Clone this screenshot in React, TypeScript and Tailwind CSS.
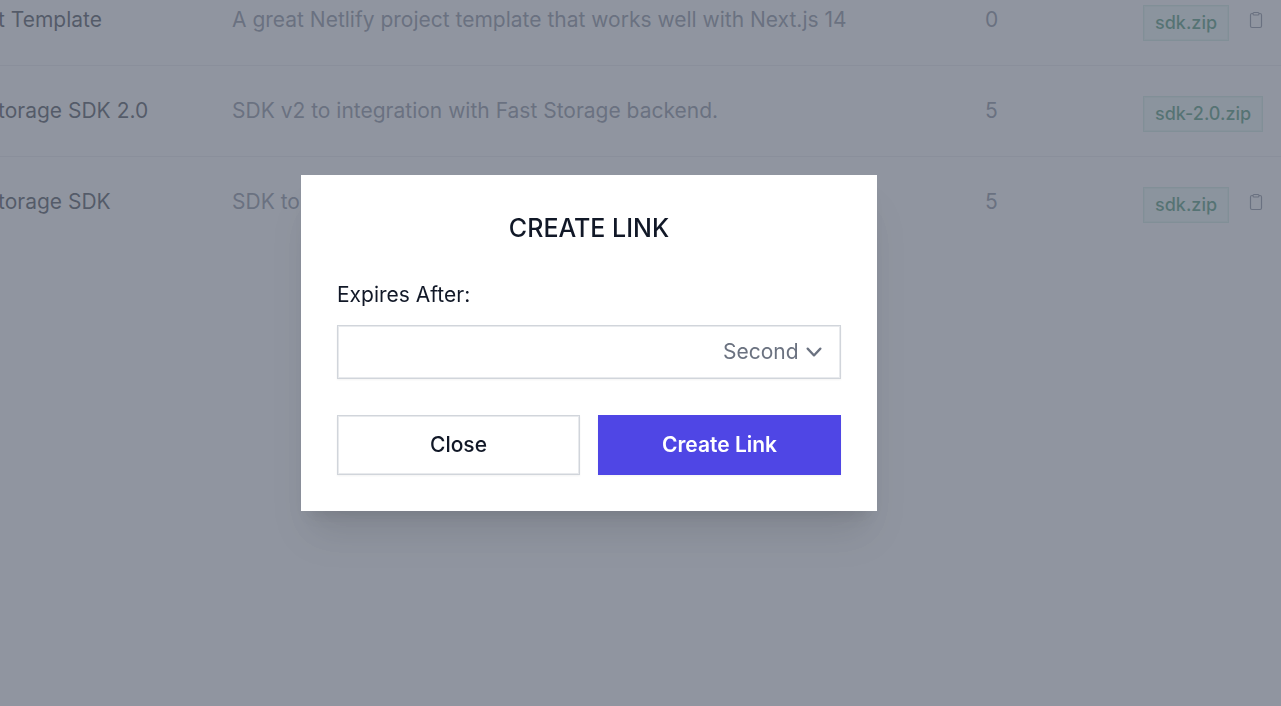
const rows = [
  { name: "t Template", description: "A great Netlify project template that works well with Next.js 14", count: 0, file: "sdk.zip", copy: true },
  { name: "torage SDK 2.0", description: "SDK v2 to integration with Fast Storage backend.", count: 5, file: "sdk-2.0.zip", copy: false },
  { name: "torage SDK", description: "SDK to", count: 5, file: "sdk.zip", copy: true },
];

function ClipboardIcon() {
  return (
    <svg viewBox="0 0 16 18" fill="none" stroke="currentColor" aria-hidden="true" className="h-[18px] w-4">
      <path d="M5 2.5H4A1.5 1.5 0 0 0 2.5 4v11A1.5 1.5 0 0 0 4 16.500h8a1.500 1.500 0 0 0 1.500-1.500V4A1.500 1.500 0 0 0 12 2.500h-1" strokeWidth="1.200" />
      <rect x="5" y="1.500" width="6" height="2.500" rx="1" strokeWidth="1.100" />
    </svg>
  );
}

function FilesTable() {
  return (
    <table className="-mt-[25px] w-full table-fixed border-separate border-spacing-0 text-left text-[21px] leading-[30px] text-gray-500">
      <colgroup>
        <col className="w-[232px]" />
        <col />
        <col className="w-[158px]" />
        <col className="w-[138px]" />
      </colgroup>
      <tbody className="[&>tr:not(:last-child)>td]:border-b [&>tr>td]:border-[#e5e7eb]">
        {rows.map((row) => (
          <tr key={row.name} className="h-[91px] align-top">
            <td className="-indent-0.5 whitespace-nowrap pt-[30px] text-[#111827]">{row.name}</td>
            <td className="whitespace-nowrap pt-[30px]">{row.description}</td>
            <td className="pt-[30px]">{row.count}</td>
            <td className="pt-[30px]">
              <div className="flex items-start gap-[19px]">
                <span className="flex h-9 items-center whitespace-nowrap border border-[#c3e6dc] bg-[#ecfaf6] px-[11px] text-lg font-medium text-[#167a50] ring-1 ring-inset ring-[#daf1ea]">
                  {row.file}
                </span>
                {row.copy && (
                  <button type="button" aria-label="Copy link" className="mt-1.5 shrink-0">
                    <ClipboardIcon />
                  </button>
                )}
              </div>
            </td>
          </tr>
        ))}
      </tbody>
    </table>
  );
}

function ChevronIcon() {
  return (
    <svg
      viewBox="0 0 20 20"
      fill="currentColor"
      aria-hidden="true"
      className="pointer-events-none absolute right-[11px] size-[30px] text-[#6b7280]"
    >
      <path
        fillRule="evenodd"
        clipRule="evenodd"
        d="M5.23 7.21a.75.75 0 011.06.02L10 11.168l3.71-3.938a.75.75 0 111.08 1.04l-4.25 4.5a.75.75 0 01-1.08 0l-4.25-4.5a.75.75 0 01.02-1.06z"
      />
    </svg>
  );
}

function CreateLinkDialog() {
  return (
    <div
      role="dialog"
      aria-modal="true"
      aria-labelledby="dialog-title"
      className="w-full max-w-[576px] bg-white p-9 text-[#111827] shadow-[0_30px_38px_-8px_rgba(0,0,0,0.1),0_12px_15px_-9px_rgba(0,0,0,0.1)]"
    >
      <h2 id="dialog-title" className="text-center text-[25px] leading-[34px] font-medium">
        CREATE LINK
      </h2>
      <label htmlFor="expires" className="mt-8 block text-[21px] leading-9">
        Expires After:
      </label>
      <div className="mt-3 flex h-[54px] items-center border border-[#d1d5db] shadow-xs ring-1 ring-inset ring-[#e8eaed]">
        <input id="expires" type="text" className="h-full min-w-0 flex-1 bg-transparent px-4 text-[21px] outline-none" />
        <div className="relative flex h-full items-center">
          <select
            aria-label="Unit"
            className="h-full appearance-none bg-transparent pr-[41px] text-[21px] text-[#6b7280] outline-none"
          >
            <option>Second</option>
          </select>
          <ChevronIcon />
        </div>
      </div>
      <div className="mt-9 grid grid-cols-2 gap-[18px] text-[21px]">
        <button
          type="button"
          className="h-[60px] border border-[#d1d5db] bg-white font-medium shadow-xs ring-1 ring-inset ring-[#e8eaed]"
        >
          Close
        </button>
        <button type="button" className="h-[60px] bg-[#4f46e5] font-semibold text-white shadow-xs">
          Create Link
        </button>
      </div>
    </div>
  );
}

export default function App() {
  return (
    <main className="h-screen overflow-hidden bg-white font-['Inter',sans-serif]">
      <FilesTable />
      <div className="fixed inset-0 flex items-center justify-center bg-[#6b7280]/75 pr-[103px] pb-5">
        <CreateLinkDialog />
      </div>
    </main>
  );
}
